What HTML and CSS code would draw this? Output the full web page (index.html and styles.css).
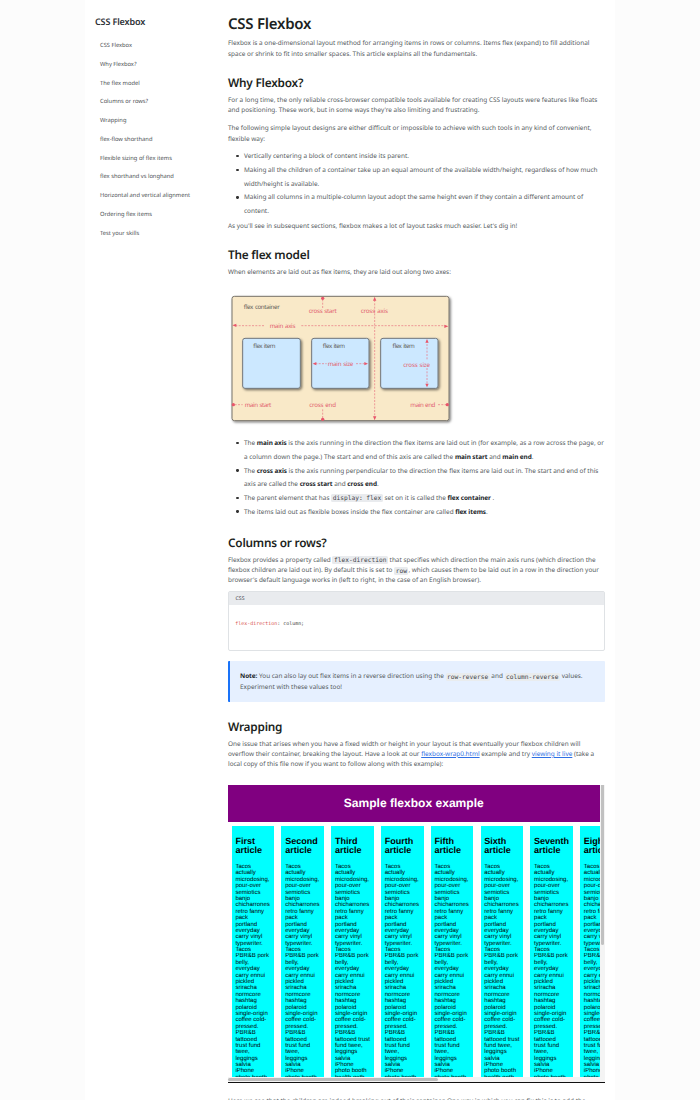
FILE: index.html
```html
<!DOCTYPE html>
<html lang="en">
<head>
<meta charset="utf-8">
<title>CSS Flexbox</title>
<link rel="stylesheet" href="styles.css">
</head>
<body>
<div class="page">
<nav class="sidebar">
<div class="sidebar-title">CSS Flexbox</div>
<a>CSS Flexbox</a><a>Why Flexbox?</a><a>The flex model</a><a>Columns or rows?</a><a>Wrapping</a><a>flex-flow shorthand</a><a>Flexible sizing of flex items</a><a>flex shorthand vs longhand</a><a>Horizontal and vertical alignment</a><a>Ordering flex items</a><a>Test your skills</a>
</nav>
<main class="content">
<h1>CSS Flexbox</h1>
<p>Flexbox is a one-dimensional layout method for arranging items in rows or columns. Items flex (expand) to fill additional<br>space or shrink to fit into smaller spaces. This article explains all the fundamentals.</p>
<h2>Why Flexbox?</h2>
<p class="wide">For a long time, the only reliable cross-browser compatible tools available for creating CSS layouts were features like floats<br>and positioning. These work, but in some ways they're also limiting and frustrating.</p>
<p class="next">The following simple layout designs are either difficult or impossible to achieve with such tools in any kind of convenient,<br>flexible way:</p>
<ul>
<li>Vertically centering a block of content inside its parent.</li>
<li>Making all the children of a container take up an equal amount of the available width/height, regardless of how much<br>width/height is available.</li>
<li>Making all columns in a multiple-column layout adopt the same height even if they contain a different amount of<br>content.</li>
</ul>
<p class="after-list">As you'll see in subsequent sections, flexbox makes a lot of layout tasks much easier. Let's dig in!</p>
<h2>The flex model</h2>
<p>When elements are laid out as flex items, they are laid out along two axes:</p>
<svg class="diagram" viewBox="24 150 690 414">
<defs><filter id="soft" x="-10%" y="-10%" width="125%" height="125%"><feDropShadow dx="4" dy="4" stdDeviation="2.5" flood-color="#000" flood-opacity=".5"/></filter></defs>
<rect x="36" y="169" width="651" height="373" rx="7" fill="#f9e9c8" stroke="#77736b" stroke-width="3" filter="url(#soft)"/>
<g fill="#cce8ff" stroke="#71767b" stroke-width="3" filter="url(#soft)">
<rect x="68" y="295" width="173" height="150" rx="7"/><rect x="275" y="295" width="172" height="150" rx="7"/><rect x="482" y="295" width="172" height="150" rx="7"/>
</g>
<g stroke="#e8717f" stroke-width="2" stroke-dasharray="6 4" fill="none">
<path d="M308 178V204M464 180V534M46 257H132M244 257H676M308 508V534M44 494H68M654 494H680M286 371H320M408 371H438M621 302V362M621 384V436"/>
</g>
<g fill="#e8566b">
<circle cx="308" cy="175" r="5"/><circle cx="308" cy="538" r="5"/><circle cx="40" cy="494" r="5"/><circle cx="682" cy="494" r="5"/>
<path d="M464 170l5 12h-10zM464 541l5-12h-10zM37 256l12-5v10zM685 259l-12-5v10zM278 371l11-5v10zM444 371l-11-5v10zM621 297l5 11h-10zM621 442l5-11h-10z"/>
</g>
<g class="label-dark"><text x="70" y="206" textLength="108">flex container</text><text x="98" y="325" textLength="67">flex item</text><text x="307" y="325" textLength="67">flex item</text><text x="516" y="325" textLength="67">flex item</text></g>
<g class="label-red"><text x="266" y="220" textLength="84">cross start</text><text x="422" y="220" textLength="82">cross axis</text><text x="149" y="263" textLength="77">main axis</text><text x="323" y="378" textLength="77">main size</text><text x="550" y="380" textLength="80">cross size</text><text x="74" y="502" textLength="80">main start</text><text x="268" y="502" textLength="80">cross end</text><text x="571" y="502" textLength="75">main end</text></g>
</svg>
<ul class="axes">
<li>The <b>main axis</b> is the axis running in the direction the flex items are laid out in (for example, as a row across the page, or<br>a column down the page.) The start and end of this axis are called the <b>main start</b> and <b>main end</b>.</li>
<li>The <b>cross axis</b> is the axis running perpendicular to the direction the flex items are laid out in. The start and end of this<br>axis are called the <b>cross start</b> and <b>cross end</b>.</li>
<li>The parent element that has <code>display: flex</code> set on it is called the <b>flex container</b> .</li>
<li>The items laid out as flexible boxes inside the flex container are called <b>flex items</b>.</li>
</ul>
<h2>Columns or rows?</h2>
<p>Flexbox provides a property called <code>flex-direction</code> that specifies which direction the main axis runs (which direction the<br>flexbox children are laid out in). By default this is set to <code>row</code>, which causes them to be laid out in a row in the direction your<br>browser's default language works in (left to right, in the case of an English browser).</p>
<div class="code-card"><div class="code-head">CSS</div><pre><span>flex-direction</span>: column;</pre></div>
<div class="note"><b>Note:</b> You can also lay out flex items in a reverse direction using the <code>row-reverse</code> and <code>column-reverse</code> values.<br>Experiment with these values too!</div>
<h2>Wrapping</h2>
<p>One issue that arises when you have a fixed width or height in your layout is that eventually your flexbox children will<br>overflow their container, breaking the layout. Have a look at our <a>flexbox-wrap0.html</a> example and try <a>viewing it live</a> (take a<br>local copy of this file now if you want to follow along with this example):</p>
<div class="sample">
<div class="sample-view">
<div class="sample-title">Sample flexbox example</div>
<div class="articles" id="articles"></div>
</div>
<div class="vtrack"><div class="vthumb"></div></div>
<div class="htrack"><div class="hthumb"></div></div>
</div>
<p class="tail">Here we see that the children are indeed breaking out of their container. One way in which you can fix this is to add the</p>
</main>
</div>
<script src="articles.js"></script>
</body>
</html>
```

FILE: styles.css
```css
*{box-sizing:border-box}
html{overflow:hidden}
body{margin:0;height:1100px;overflow:hidden;background:#fcfcfc;color:#555b60;font:6.43px/10.4px "Noto Sans",sans-serif;text-rendering:geometricPrecision;white-space:nowrap}
.page{width:530px;height:1100px;margin:0 auto;background:#fff;display:flex;overflow:hidden}
.sidebar{width:143px;padding:14px 0 0 10px;flex:none;display:flex;flex-direction:column}
.sidebar-title{font-size:9.04px;font-weight:600;letter-spacing:-.14px;line-height:15px;color:#2b3035;margin-bottom:7.2px}
.sidebar a{font-size:5.76px;line-height:18.75px;padding-left:5px;color:#4c5054}
.content{width:377px;padding-top:14px;flex:none}
h1,h2,p,ul,pre{margin:0}
h1{font-size:15px;line-height:20px;font-weight:600;letter-spacing:-.25px;color:#1c1f21;margin-bottom:4.2px}
h2{font-size:11.8px;line-height:16px;font-weight:600;letter-spacing:-.21px;color:#1c1f21;margin:15.6px 0 4.1px}
.wide{letter-spacing:.011px}
.next{margin-top:7.8px}
ul{margin-top:5.2px;padding-left:16px;line-height:13.7px;list-style:none}
li{position:relative}
li::before{content:"";position:absolute;left:-7.6px;top:5.8px;width:2.3px;height:2.3px;border-radius:50%;background:#333}
.after-list{margin-top:3.3px}
b{color:#212529;font-weight:700;letter-spacing:-.08px}
code{font:6.23px/8px "DejaVu Sans Mono",monospace;background:#e9ebee;color:#3f4449;padding:.5px 1.5px;border-radius:1.5px}
.diagram{display:block;width:230px;height:138px;margin-top:12.4px}
.diagram text{font-family:"Noto Sans",sans-serif;font-size:18.5px;word-spacing:2px}
.label-dark{fill:#62605a}
.label-red{fill:#e2606f}
.axes{margin-top:8.1px}
.axes+h2{margin-top:16.2px}
.code-card{height:59.7px;margin-top:5px;border:1px solid #dfe2e5;border-radius:2px}
.code-head{height:13px;background:#e9ebee;padding-left:6.5px;font-size:5.2px;line-height:12.5px;color:#3f4449}
pre{font:4.98px/10px "DejaVu Sans Mono",monospace;padding:14.2px 0 0 6.3px;color:#444}
pre span{color:#d9534f}
.note{height:41px;margin-top:10.5px;border-left:2px solid #1a73f8;border-radius:1px;background:#e6f0ff;padding:10.2px 0 0 10px}
.note code{background:#e9ecee}
.content a{color:#2f6fe4;text-decoration:underline;text-decoration-thickness:.6px}
.note+h2{margin-top:16.5px}
.sample{display:grid;grid-template-columns:371.5px 5.5px;grid-template-rows:292.5px 5.5px;height:298px;margin-top:14.8px;font-family:"Liberation Sans",Arial,sans-serif;color:#000}
.sample-view{overflow:hidden;background:#fff}
.sample-title{height:37.5px;background:#800080;color:#fff;text-align:center;font-size:12.05px;font-weight:700;line-height:37.6px}
.articles{display:flex;gap:7.2px;padding:4px 0 0 3.6px}
.article{width:42.6px;height:251px;flex:none;background:#0ff;padding:10.6px 0 0 3.8px;overflow:hidden;font-size:6px;line-height:6.385px}
.article h3{margin:0 0 8.1px;font-size:9px;line-height:9.6px}
.vtrack{background:#f4f4f4;padding-left:1.5px}
.vthumb{width:3px;height:160px;background:#c1c1c1;border-radius:0 0 1.5px 1.5px}
.htrack{grid-column:1/3;background:#f4f4f4;border-bottom:1.2px solid #111;padding-top:1px}
.hthumb{width:210px;height:3.2px;background:#bdbdbd;border-radius:1.5px}
.tail{margin-top:13.8px}
```

FILE: articles.js
```js
const start = ["Tacos","actually","microdosing,","pour-over","semiotics","banjo","chicharrones","retro fanny","pack","portland","everyday","carry vinyl","typewriter.","Tacos","PBR&B pork","belly,","everyday","carry ennui","pickled","sriracha","normcore","hashtag","polaroid","single-origin","coffee cold-","pressed.","PBR&B"];
const narrow = ["tattooed","trust fund","twee,","leggings","salvia","iPhone","photo booth"];
const wide = ["tattooed trust","fund twee,","leggings","salvia","iPhone","photo booth","health goth"];
const names = ["First","Second","Third","Fourth","Fifth","Sixth","Seventh","Eighth"];
document.getElementById("articles").innerHTML = names.map((name, i) => {
  const lines = start.concat(i === 2 || i === 5 ? wide : narrow);
  return `<div class="article"><h3>${name}<br>article</h3>${lines.join("<br>").replaceAll("&", "&amp;")}</div>`;
}).join("");
```
